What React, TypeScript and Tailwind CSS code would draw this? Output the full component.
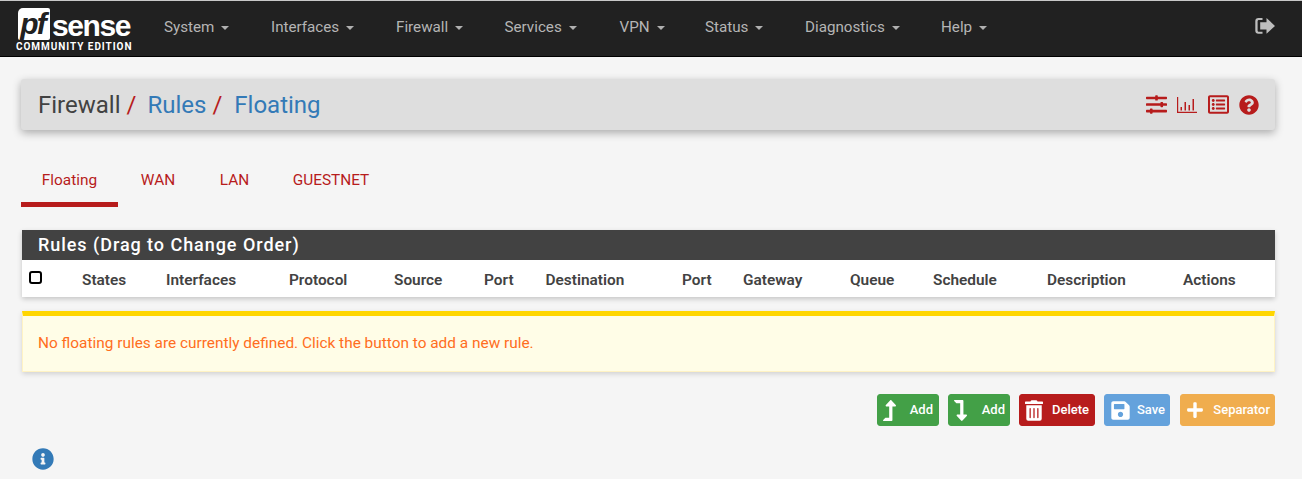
import React from "react";
import { FaSlidersH, FaRegListAlt, FaQuestionCircle, FaInfoCircle, FaLevelUpAlt, FaLevelDownAlt, FaTrashAlt, FaSave, FaPlus } from "react-icons/fa";

const Caret = () => <span className="inline-block ml-[7px] align-middle w-0 h-0 border-x-[4px] border-x-transparent border-t-[4px] border-t-[#b0b0b0]" />;

const nav = [
  ["System", "w-[107px]"],
  ["Interfaces", "w-[125px]"],
  ["Firewall", "w-[108.5px]"],
  ["Services", "w-[115px]"],
  ["VPN", "w-[85.5px]"],
  ["Status", "w-[100px]"],
  ["Diagnostics", "w-[136px]"],
  ["Help", "w-[80px]"],
];

const cols: [string, string][] = [
  ["States", "w-[84px]"],
  ["Interfaces", "w-[123px]"],
  ["Protocol", "w-[105px]"],
  ["Source", "w-[90px]"],
  ["Port", "w-[61.5px]"],
  ["Destination", "w-[136.5px]"],
  ["Port", "w-[61px]"],
  ["Gateway", "w-[107px]"],
  ["Queue", "w-[83px]"],
  ["Schedule", "w-[114px]"],
  ["Description", "w-[136px]"],
  ["Actions", "w-[80px]"],
];

function Btn({ color, border, icon, label, w }: { color: string; border: string; icon: React.ReactNode; label: string; w: string }) {
  return (
    <button className={`${color} ${border} ${w} h-[32px] border rounded-[3px] flex items-center justify-between pl-[5px] text-white text-[13px] font-medium`}>
      <span className="flex items-center justify-center">{icon}</span>
      <span>{label}</span>
    </button>
  );
}

export default function App() {
  return (
    <div className="w-[1302px] h-[479px] overflow-hidden bg-[#f5f5f5] font-['Roboto',sans-serif] text-[#424242]">
      <nav className="h-[57px] bg-[#212121] border-t border-t-[#c8c8c8] border-b border-b-black flex items-start">
        <div className="w-[143px] shrink-0 pl-[18px] pt-[7px] flex flex-col">
          <div className="flex items-center h-[32px]">
            <span className="w-[32px] h-[32px] bg-white rounded-[2px] rounded-tl-[5px] flex items-center justify-center text-[#212121] font-bold italic text-[30px] leading-[30px] tracking-[-2px] font-['Liberation_Sans',sans-serif] pr-[3px]">pf</span>
            <span className="text-white font-bold text-[30px] leading-[24px] ml-[2px] tracking-[-1.400px] font-['Liberation_Sans',sans-serif] mt-[3px]">sense</span>
          </div>
          <span className="text-white text-[10px] font-bold tracking-[0.950px] leading-[10px] mt-[2px] -ml-[2px] whitespace-nowrap">COMMUNITY EDITION</span>
        </div>
        <div className="flex pl-[21px] text-[15.2px] leading-[52px] text-[#b5b5b5]">
          {nav.map(([n, w]) => (
            <span key={n} className={`${w} whitespace-nowrap`}>
              {n}
              <Caret />
            </span>
          ))}
        </div>
        <div className="ml-auto pr-[27px] pt-[16px]">
          <svg width="20" height="18" viewBox="0 0 20 18" className="text-[#bdbdbd]" fill="currentColor">
            <path d="M7.500 3V1H3.400C1.500 1 .3 2.300.3 4v9.800c0 1.700 1.200 3 3.100 3h4.100v-2H4c-.9 0-1.400-.6-1.400-1.400V4.400C2.600 3.600 3.100 3 4 3h3.500z" />
            <path d="M11.500 1 20 8.900l-8.500 7.900v-4.300H5.200V5.300h6.300z" />
          </svg>
        </div>
      </nav>

      <main className="px-[21px] pt-[22px]">
        <div className="h-[51px] w-[1254px] bg-[#dedede] rounded-[3px] shadow-[0_3px_8px_rgba(0,0,0,0.3)] flex items-center justify-between pl-[17px] pr-[16px]">
          <div className="text-[24px] leading-none flex items-center whitespace-nowrap">
            <span className="text-[#424242]">Firewall</span>
            <span className="text-[#b71c1c] ml-[6px]">/</span>
            <span className="text-[#337ab7] ml-[11px]">Rules</span>
            <span className="text-[#b71c1c] ml-[6px]">/</span>
            <span className="text-[#337ab7] ml-[12px]">Floating</span>
          </div>
          <div className="flex items-center text-[#b71c1c]">
            <FaSlidersH size={21} />
            <svg width="20" height="16" viewBox="0 0 20 16" fill="currentColor" className="ml-[10px]">
              <path d="M0 0h1.200v14.800H20V16H0z" />
              <path d="M3.500 10h1.500v3.500H3.500zM7.500 5h1.500v8.500H7.500zM11.500 8h1.500v5.500h-1.500zM15.500 2h1.500v11.500h-1.500z" />
            </svg>
            <FaRegListAlt size={21} className="ml-[11px]" />
            <FaQuestionCircle size={20} className="ml-[10px]" />
          </div>
        </div>

        <div className="flex mt-[29px] h-[48px] text-[15.4px] text-[#b71c1c]">
          <span className="w-[97px] h-[48px] border-b-[5px] border-b-[#b71c1c] pt-[11px] text-center leading-[20px]">Floating</span>
          <span className="w-[80px] pt-[11px] text-center leading-[20px]">WAN</span>
          <span className="w-[73px] pt-[11px] text-center leading-[20px]">LAN</span>
          <span className="w-[120px] pt-[11px] text-center leading-[20px]">GUESTNET</span>
        </div>

        <section className="mt-[23px] ml-px w-[1253px] bg-white shadow-[0_2px_5px_rgba(0,0,0,0.2)]">
          <h2 className="h-[30px] bg-[#424242] text-white text-[18px] font-medium tracking-[0.95px] leading-[30px] pl-[16px]">Rules (Drag to Change Order)</h2>
          <div className="h-[37px] pt-[4px] flex items-center text-[15.4px] font-semibold">
            <span className="w-[60px] shrink-0 pl-[7px]">
              <span className="block w-[13px] h-[13px] border-2 border-black rounded-[3px] -mt-[7px]" />
            </span>
            {cols.map(([c, w], i) => (
              <span key={i} className={`${w} shrink-0 whitespace-nowrap`}>{c}</span>
            ))}
          </div>
        </section>

        <div className="mt-[14px] ml-px w-[1253px] h-[61px] bg-[#fffde7] border-t-[5px] border-t-[#ffd600] border-x border-x-[#fff3c4] border-b border-b-[#fff3c4] shadow-[0_2px_5px_rgba(0,0,0,0.15)] text-[15.4px] text-[#ff6d21] pl-[15px] leading-[54px]">
          No floating rules are currently defined. Click the button to add a new rule.
        </div>

        <div className="mt-[22px] flex justify-end gap-[9px] w-[1254px]">
          <Btn w="w-[62px] pr-[5px]" color="bg-[#43a047]" border="border-[#43a047]" icon={<FaLevelUpAlt className="w-[13px] h-[21px]" />} label="Add" />
          <Btn w="w-[62px] pr-[4px]" color="bg-[#43a047]" border="border-[#43a047]" icon={<FaLevelDownAlt className="w-[13px] h-[21px]" />} label="Add" />
          <Btn w="w-[76px] pr-[5px]" color="bg-[#b71c1c]" border="border-[#b71c1c]" icon={<FaTrashAlt className="w-[18px] h-[21px]" />} label="Delete" />
          <Btn w="w-[66px] pr-[4px]" color="bg-[#64a2dc]" border="border-[#64a2dc]" icon={<FaSave className="w-[21px] h-[21px]" />} label="Save" />
          <Btn w="w-[95px] ml-px pr-[4px]" color="bg-[#f0ad4e]" border="border-[#f0ad4e]" icon={<FaPlus className="w-[18px] h-[18px]" />} label="Separator" />
        </div>

        <div className="mt-[22px] ml-[11px] text-[#337ab7]">
          <FaInfoCircle size={22} />
        </div>
      </main>
    </div>
  );
}
